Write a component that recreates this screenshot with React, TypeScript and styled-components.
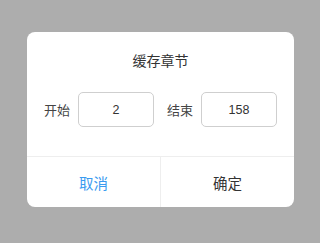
import styled, { createGlobalStyle } from "styled-components"

const GlobalStyle = createGlobalStyle`
  html, body {
    margin: 0;
    padding: 0;
    background: #adadad;
    font-family: "Noto Sans CJK SC", "Noto Sans", sans-serif;
  }
`

const Overlay = styled.div`
  width: 320px;
  height: 243px;
  box-sizing: border-box;
  padding: 32px 26px 0 27px;
`

const Dialog = styled.div`
  width: 267px;
  background: #fff;
  border-radius: 8px;
  overflow: hidden;
`

const Title = styled.div`
  padding-top: 18px;
  height: 20px;
  line-height: 20px;
  text-align: center;
  font-size: 14px;
  color: #333;
`

const RangeRow = styled.div`
  display: flex;
  align-items: center;
  padding: 22px 17px 29px 17px;
`

const Label = styled.span`
  font-size: 13px;
  color: #444;
  width: 26px;
  margin-right: 8px;
  white-space: nowrap;
`

const NumberBox = styled.div<{ $gapRight?: boolean }>`
  width: 76px;
  height: 35px;
  box-sizing: border-box;
  border: 1px solid #cfcfcf;
  border-radius: 5px;
  display: flex;
  align-items: center;
  justify-content: center;
  font-family: "Liberation Sans", "Noto Sans", sans-serif;
  font-size: 12.5px;
  color: #333;
  margin-right: ${(p) => (p.$gapRight ? "13px" : "0")};
`

const Footer = styled.div`
  display: flex;
  border-top: 1px solid #eee;
  height: 50px;
`

const FooterButton = styled.div<{ $primary?: boolean; $divider?: boolean }>`
  flex: 1;
  display: flex;
  align-items: center;
  justify-content: center;
  font-size: 14.5px;
  color: ${(p) => (p.$primary ? "#3a9bf0" : "#333")};
  border-right: ${(p) => (p.$divider ? "1px solid #eee" : "none")};
`

export default function App() {
  return (
    <>
      <GlobalStyle />
      <Overlay>
        <Dialog>
          <Title>缓存章节</Title>
          <RangeRow>
            <Label>开始</Label>
            <NumberBox $gapRight>2</NumberBox>
            <Label>结束</Label>
            <NumberBox>158</NumberBox>
          </RangeRow>
          <Footer>
            <FooterButton $primary $divider>取消</FooterButton>
            <FooterButton>确定</FooterButton>
          </Footer>
        </Dialog>
      </Overlay>
    </>
  )
}
